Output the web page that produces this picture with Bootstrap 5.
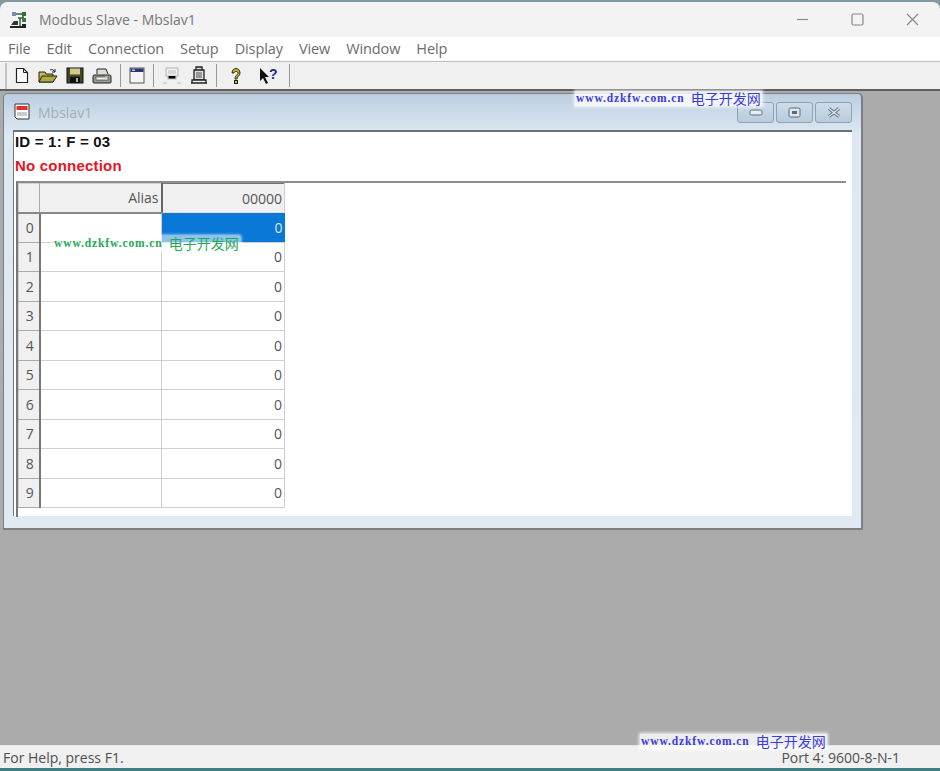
<!DOCTYPE html>
<html lang="en">
<head>
<meta charset="utf-8">
<title>Modbus Slave - Mbslav1</title>
<link href="https://cdn.jsdelivr.net/npm/bootstrap@5.3.0/dist/css/bootstrap.min.css" rel="stylesheet">
<style>
html,body{height:771px;overflow:hidden;background:#7f9aa0}
body{font-family:"Open Sans","Noto Sans","Liberation Sans",sans-serif;position:relative;width:940px}
.app-shell{height:771px;padding-top:2px;padding-bottom:3px;display:flex;flex-direction:column}
.app-title{height:35px;background:#f3f3f3;border-radius:7px 7px 0 0;flex:none;padding-left:9px;color:#777;font-size:14px;gap:6px}
.win-ctl{margin-left:auto;display:flex;align-items:center}
.win-ctl svg{display:block;margin-right:21px}
.win-ctl svg+svg{margin-left:21px}
.menu-bar{height:24px;background:#fff;flex:none;padding-left:8px;gap:16px;font-size:14.5px;color:#6c6c6c;letter-spacing:-.1px}
.tool-bar{height:30px;background:#f0f0f0;border-top:1px solid #bdbdbd;border-bottom:2px solid #5f5f5f;flex:none;padding-left:5px}
.tool-bar svg{display:block;flex:none}
.grip{width:2px;height:26px;background:#c4c4c4;margin-right:7px}
.tool-sep{width:1px;height:23px;background:#9a9a9a;margin:0 6px}
.mdi-area{flex:1;background:#ababab;padding:2px 0 0 3px;min-height:0}
.child-win{width:860px;height:437px;background:linear-gradient(#bccfe0,#dce8f2 40px,#dfeaf3);border:1px solid #7a7f85;border-width:1px 2px 2px 1px;border-radius:5px 5px 0 0;padding:0 9px 12px 9px;display:flex;flex-direction:column}
.child-title{height:36px;flex:none;color:#a6adb5;font-size:14px;gap:6px;padding-left:1px}
.cap-btns{margin-left:auto;gap:2px;padding-top:1px}
.cap-btn{width:37px;height:21px;border:1px solid #8ea2b5;border-radius:3px;background:linear-gradient(#cddcea,#b8cbdc);display:flex;align-items:center;justify-content:center}
.client-pane{flex:1;background:#fff;border-top:2px solid #6d7074;border-left:1px solid #777;min-height:0;padding:0 3px 0 0}
.info-line{height:22px;font-size:15px;font-weight:700;line-height:20px;color:#111;padding-left:1px;font-family:"Liberation Sans",sans-serif;letter-spacing:.2px}
.info-red{color:#e8141f;height:27px;padding-top:2px}
.grid-pane{border-top:2px solid #8c8c8c;border-left:2px solid #777;margin-left:2px;margin-right:3px;height:336px}
.reg-table{width:266px;table-layout:fixed;border-collapse:collapse;font-size:14px;color:#555}
.reg-table td,.reg-table th{padding:0 2px 0 0;border:1px solid #cfcfcf;text-align:right;font-weight:400;vertical-align:middle}
.reg-table tr.head-row{height:29px}
.reg-table tr.data-row{height:29.5px}
.hcell{background:#f0f0f0!important}
.reg-table .hcell-num{text-align:center;padding:0 0 0 2px;border-right:2px solid #777;border-bottom:1px solid #aaa}
.reg-table .corner{border-right:1px solid #aaa;border-bottom:2px solid #888}
.reg-table .alias-h{border-right:2px solid #666;border-bottom:2px solid #888;color:#555}
.reg-table .val-h{border-top:1px solid #777;border-bottom:1px solid #e0e0e0;color:#555}
.reg-table .sel{background:#0a78d7;color:#dbeaf7;border:0}
.status-bar{height:23px;background:#f0f0f0;flex:none;border-top:1px solid #e3e3e3;font-size:14px;color:#4f4f4f;padding:0 40px 0 3px;justify-content:space-between}
.wm{position:absolute;display:flex;gap:6px;align-items:center;line-height:15px;background:rgba(255,255,255,.8);box-shadow:0 0 3px 1px rgba(255,255,255,.85);white-space:nowrap;padding:0 1px}
.wm-en{font-family:"Liberation Serif",serif;font-size:11.5px;font-weight:700;letter-spacing:.9px}
.wm-cn{font-family:"Noto Sans CJK SC",sans-serif;font-size:14px}
.wm-blue{color:#3a3ae6}
.wm-green{color:#1faa55;background:rgba(255,255,255,.55)}
.wm-a{left:575px;top:91px}
.wm-b{left:53px;top:236px}
.wm-c{left:640px;top:734px}
.foot-strip{position:absolute;left:0;right:0;bottom:0;height:3px;background:#3f7e83}
</style>
</head>
<body>
<div class="app-shell">
  <div class="app-title d-flex align-items-center">
    <svg width="20" height="20" viewBox="0 0 20 20"><path d="M1 16h12v2H1z" fill="#222"/><path d="M2 15l3-4h4v4z" fill="#333"/><path d="M5 4h9M14 4v4M9 8h6M11 8v8" stroke="#2a6a3a" stroke-width="1.5" fill="none"/><rect x="3" y="2" width="4" height="4" fill="#7a8ab0"/><rect x="13" y="2" width="4" height="4" fill="#3a6a3a"/><rect x="13" y="8" width="4" height="4" fill="#3a7a4a"/><rect x="13" y="14" width="4" height="4" fill="#222"/></svg>
    <span class="ms-1">Modbus Slave - Mbslav1</span>
    <div class="win-ctl">
      <svg width="13" height="13" viewBox="0 0 13 13"><path d="M1 6.5h11" stroke="#8a8a8a" stroke-width="1.2"/></svg>
      <svg width="13" height="13" viewBox="0 0 13 13"><rect x="1" y="1" width="11" height="11" rx="1.5" fill="none" stroke="#8a8a8a" stroke-width="1.2"/></svg>
      <svg width="13" height="13" viewBox="0 0 13 13" style="margin-left:21px"><path d="M1 1l11 11M12 1L1 12" stroke="#8a8a8a" stroke-width="1.2"/></svg>
    </div>
  </div>
  <div class="menu-bar d-flex align-items-center">
    <span>File</span><span>Edit</span><span>Connection</span><span>Setup</span><span>Display</span><span>View</span><span>Window</span><span>Help</span>
  </div>
  <div class="tool-bar d-flex align-items-center">
    <div class="grip"></div>
    <svg width="16" height="17" viewBox="0 0 16 17" class="me-2"><path d="M2.5 1.5h7l4 4v10h-11z" fill="#fff" stroke="#222" stroke-width="1.2"/><path d="M9.5 1.5v4h4" fill="none" stroke="#222"/></svg>
    <svg width="20" height="16" viewBox="0 0 20 16" class="me-1"><path d="M1 14V4h6l1 2h7v8z" fill="#c9b84f" stroke="#222"/><path d="M1 14l3-6h15l-4 6z" fill="#b5a83a" stroke="#222"/><path d="M12 2c2-1 4 0 5 2M17 1v3h-3" fill="none" stroke="#222"/></svg>
    <svg width="18" height="17" viewBox="0 0 18 17" class="ms-1 me-2"><rect x="1" y="1" width="16" height="15" fill="#3f4a22" stroke="#111"/><rect x="4" y="1.5" width="10" height="6" fill="#d4c98a"/><rect x="4" y="10" width="10" height="6" fill="#111"/><rect x="10" y="11" width="2" height="4" fill="#aaa"/></svg>
    <svg width="20" height="18" viewBox="0 0 20 18"><path d="M5 7V2h9l2 5" fill="#ddd" stroke="#222"/><path d="M2 8h16q1 0 1 2v5q0 1-1 1H2q-1 0-1-1v-5q0-2 1-2z" fill="#9a9a9a" stroke="#222"/><rect x="4" y="10" width="12" height="3" fill="#eee" stroke="#333" stroke-width=".6"/><rect x="13" y="9" width="3" height="1" fill="#cc3"/></svg>
    <div class="tool-sep ms-2 me-2"></div>
    <svg width="16" height="17" viewBox="0 0 16 17"><rect x="1" y="1" width="14" height="15" fill="#f4f4f4" stroke="#555"/><rect x="1.5" y="1.5" width="13" height="3.5" fill="#28366f"/><rect x="3" y="2.5" width="3" height="1.5" fill="#bcd"/></svg>
    <div class="tool-sep ms-2 me-2"></div>
    <svg width="20" height="18" viewBox="0 0 20 18"><rect x="4" y="1" width="12" height="8" fill="none" stroke="#bdbdbd" stroke-width="1.2"/><path d="M6 4h8M6 6h8M6 9v3h8V9M1 16h4M15 16h4" stroke="#bdbdbd" stroke-width="1.2"/></svg>
    <svg width="18" height="19" viewBox="0 0 18 19" class="ms-2"><path d="M6 1h6v3H6zM4 4h10v10H4z" fill="#ddd" stroke="#222" stroke-width="1.3"/><path d="M6 7h6M6 9h6M6 11h6" stroke="#555"/><path d="M1 17h16M2 14h14v3H2z" fill="#eee" stroke="#222" stroke-width="1.3"/></svg>
    <div class="tool-sep ms-2 me-2"></div>
    <svg width="14" height="18" viewBox="0 0 14 18" class="ms-1"><path d="M3 6c0-6 8-6 8 0 0 3-3 3-3 6H6c0-4 3-4 3-6 0-2-4-2-4 0z" fill="#c8bc22" stroke="#222"/><rect x="5.5" y="13.5" width="3" height="3" fill="#c8bc22" stroke="#222"/></svg>
    <svg width="22" height="18" viewBox="0 0 22 18" class="ms-3"><path d="M1 1v13l3-3 3 6 2-1-3-6h4z" fill="#111"/><text x="10" y="12" font-family="Liberation Sans, sans-serif" font-size="14" font-weight="700" fill="#24248f">?</text></svg>
    <div class="tool-sep ms-2"></div>
  </div>
  <div class="mdi-area">
    <div class="child-win">
      <div class="child-title d-flex align-items-center">
        <svg width="18" height="18" viewBox="0 0 18 18"><path d="M1 1h14v15H3l-2-2z" fill="#fff" stroke="#333"/><rect x="2.5" y="3" width="11" height="4" fill="#e03030"/><path d="M3 10h10M3 12h10" stroke="#999"/></svg>
        <span>Mbslav1</span>
        <div class="cap-btns d-flex">
          <div class="cap-btn"><svg width="14" height="7" viewBox="0 0 14 7"><rect x="1" y="1" width="12" height="5" rx="1.5" fill="#e8edf2" stroke="#5f6a75"/></svg></div>
          <div class="cap-btn"><svg width="13" height="11" viewBox="0 0 13 11"><rect x="1" y="1" width="11" height="9" rx="1.5" fill="#dfe6ec" stroke="#5f6a75"/><rect x="4" y="4" width="5" height="3" fill="#5f6a75"/></svg></div>
          <div class="cap-btn"><svg width="14" height="11" viewBox="0 0 14 11"><path d="M2 1.5l10 8M12 1.5l-10 8" stroke="#5f6a75" stroke-width="3"/><path d="M2 1.5l10 8M12 1.5l-10 8" stroke="#eef2f5" stroke-width="1.2"/></svg></div>
        </div>
      </div>
      <div class="client-pane">
        <div class="info-line">ID = 1: F = 03</div>
        <div class="info-line info-red">No connection</div>
        <div class="grid-pane">
          <table class="reg-table">
            <colgroup><col style="width:21px"><col style="width:122px"><col style="width:123px"></colgroup>
            <tr class="head-row"><th class="hcell corner"></th><th class="hcell alias-h">Alias</th><th class="hcell val-h">00000</th></tr>
            <tr class="data-row"><th class="hcell hcell-num">0</th><td></td><td class="sel">0</td></tr>
            <tr class="data-row"><th class="hcell hcell-num">1</th><td></td><td>0</td></tr>
            <tr class="data-row"><th class="hcell hcell-num">2</th><td></td><td>0</td></tr>
            <tr class="data-row"><th class="hcell hcell-num">3</th><td></td><td>0</td></tr>
            <tr class="data-row"><th class="hcell hcell-num">4</th><td></td><td>0</td></tr>
            <tr class="data-row"><th class="hcell hcell-num">5</th><td></td><td>0</td></tr>
            <tr class="data-row"><th class="hcell hcell-num">6</th><td></td><td>0</td></tr>
            <tr class="data-row"><th class="hcell hcell-num">7</th><td></td><td>0</td></tr>
            <tr class="data-row"><th class="hcell hcell-num">8</th><td></td><td>0</td></tr>
            <tr class="data-row"><th class="hcell hcell-num">9</th><td></td><td>0</td></tr>
          </table>
        </div>
      </div>
    </div>
  </div>
  <div class="status-bar d-flex align-items-center">
    <span>For Help, press F1.</span><span>Port 4: 9600-8-N-1</span>
  </div>
</div>
<div class="foot-strip"></div>
<div class="wm wm-blue wm-a"><span class="wm-en">www.dzkfw.com.cn</span><span class="wm-cn">电子开发网</span></div>
<div class="wm wm-green wm-b"><span class="wm-en">www.dzkfw.com.cn</span><span class="wm-cn">电子开发网</span></div>
<div class="wm wm-blue wm-c"><span class="wm-en">www.dzkfw.com.cn</span><span class="wm-cn">电子开发网</span></div>
</body>
</html>
